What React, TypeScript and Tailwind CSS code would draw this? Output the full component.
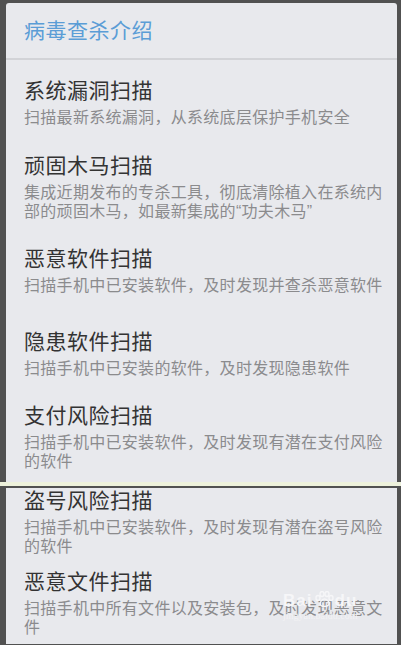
import React from 'react'

type Item = { title: string; desc: string; gap: string }

const upperItems: Item[] = [
    { title: '系统漏洞扫描', desc: '扫描最新系统漏洞，从系统底层保护手机安全', gap: 'mt-[18px]' },
    { title: '顽固木马扫描', desc: '集成近期发布的专杀工具，彻底清除植入在系统内部的顽固木马，如最新集成的“功夫木马”', gap: 'mt-[26px]' },
    { title: '恶意软件扫描', desc: '扫描手机中已安装软件，及时发现并查杀恶意软件', gap: 'mt-[25px]' },
    { title: '隐患软件扫描', desc: '扫描手机中已安装的软件，及时发现隐患软件', gap: 'mt-[34px]' },
    { title: '支付风险扫描', desc: '扫描手机中已安装软件，及时发现有潜在支付风险的软件', gap: 'mt-[25px]' },
]

const lowerItems: Item[] = [
    { title: '盗号风险扫描', desc: '扫描手机中已安装软件，及时发现有潜在盗号风险的软件', gap: 'mt-[2px]' },
    { title: '恶意文件扫描', desc: '扫描手机中所有文件以及安装包，及时发现恶意文件', gap: 'mt-[13px]' },
]

const Row = ({ item }: { item: Item }) => (
    <div className={`${item.gap} pl-[18px] pr-[10px]`}>
        <div className="text-[21px] leading-[26px] tracking-[0.5px] text-[#333333]">{item.title}</div>
        <div className="mt-1 text-[16px] leading-[19px] tracking-[0.3px] text-[#8b8b8d]">{item.desc}</div>
    </div>
)

export default function App() {
    return (
        <div
            className="w-[401px] h-[645px] overflow-hidden bg-[#515151] pt-[3px]"
            style={{ fontFamily: '"Liberation Sans", "Noto Sans CJK SC", sans-serif' }}
        >
            {/* upper half of the dialog */}
            <div className="ml-[6px] mr-[4px] h-[479px] rounded-t-[3px] bg-[#e8e9ed]">
                <div className="h-[55px] flex items-center pl-[18px]">
                    <span className="text-[21px] tracking-[0.5px] text-[#5b9dd6]">病毒查杀介绍</span>
                </div>
                <div className="h-[2px] bg-[#d2d3d7]" />
                {upperItems.map((item) => (
                    <Row key={item.title} item={item} />
                ))}
            </div>

            {/* stitch line */}
            <div className="h-[4px] bg-[#eef2dc]" />

            {/* lower half */}
            <div className="relative ml-[6px] mr-[4px] h-[156px] bg-[#e8e9ed]">
                {lowerItems.map((item) => (
                    <Row key={item.title} item={item} />
                ))}

                {/* watermark */}
                <div className="absolute left-[277px] top-[103px] flex flex-col items-center text-[#f6f6f8] pointer-events-none">
                    <div className="flex items-end leading-none">
                        <span className="text-[17px] font-bold tracking-[1px]">Bai</span>
                        <svg width="20" height="16" viewBox="0 0 20 16" className="mx-[1px] mb-[2px]">
                            <g fill="none" stroke="currentColor" strokeWidth="1.4">
                                <ellipse cx="4" cy="7" rx="2" ry="2.5" />
                                <ellipse cx="8" cy="3" rx="2" ry="2.5" />
                                <ellipse cx="13" cy="3" rx="2" ry="2.5" />
                                <ellipse cx="17" cy="7" rx="2" ry="2.5" />
                                <path d="M10.5 8c-3 0-5 4-4 6s6 2 8 0s-1-6-4-6z" />
                            </g>
                        </svg>
                        <span className="text-[17px] font-bold tracking-[1px]">du</span>
                    </div>
                    <span className="mt-[2px] text-[10px] leading-none text-[#f2f2f4]" style={{ fontFamily: '"Liberation Serif", serif' }}>
                        jingyan.baidu.com
                    </span>
                </div>
            </div>
        </div>
    )
}
